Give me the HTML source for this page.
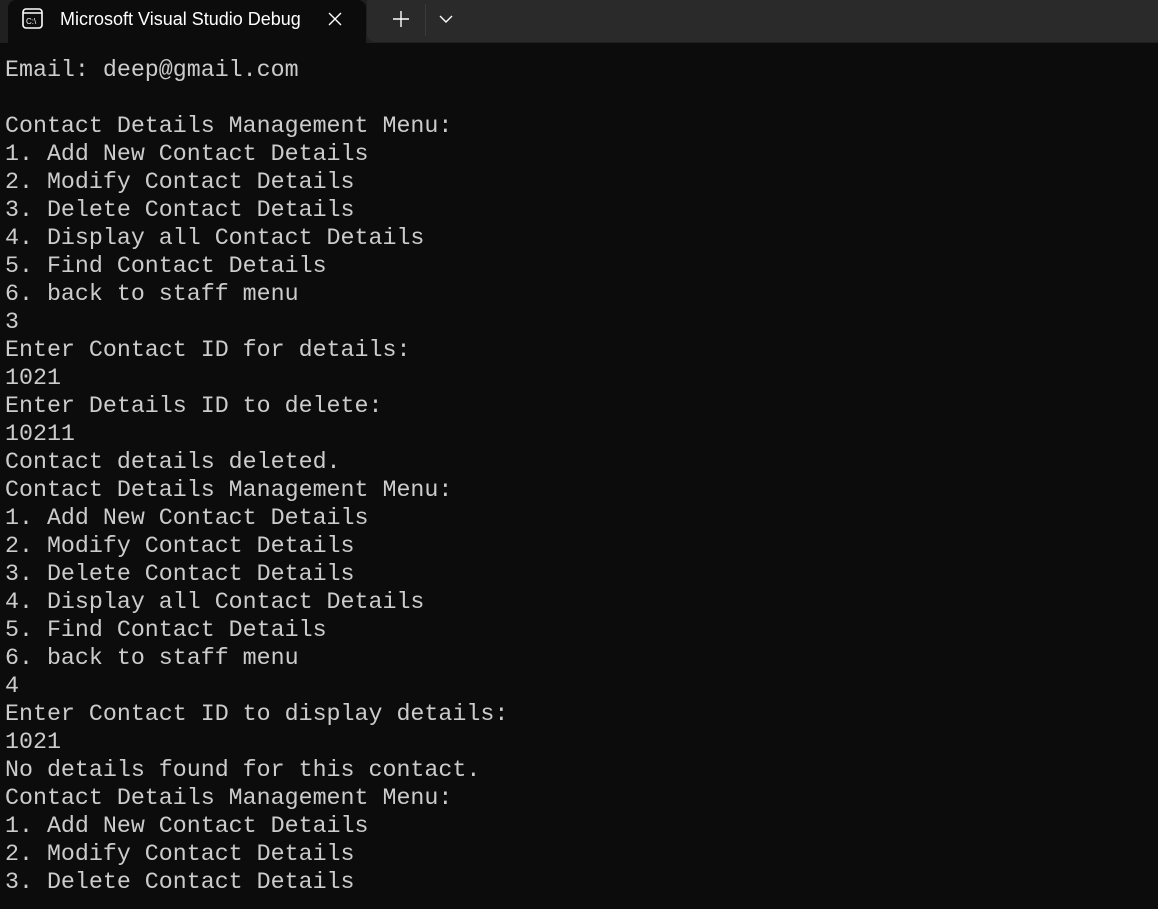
<!DOCTYPE html>
<html><head><style>
body{margin:0;width:1158px;height:909px;background:#0c0c0c;overflow:hidden;position:relative;font-family:"Liberation Mono",monospace}
.bar{position:absolute;left:0;top:0;width:1158px;height:43px;background:#202020}
.tab{position:absolute;left:8px;top:0;width:358px;height:43px;background:#0c0c0c;border-radius:8px 8px 0 0}
.title{position:absolute;left:60px;top:9px;font:18px "Liberation Sans",sans-serif;color:#fff;width:246px;overflow:hidden;white-space:nowrap}
.btns{position:absolute;left:367px;top:0;width:791px;height:42px;background:#2a2a2a;border-radius:0 0 0 8px}
pre{position:absolute;left:5px;top:56px;margin:0;font-size:23.3px;line-height:28px;color:#cccccc;font-family:"Liberation Mono",monospace}
</style></head><body>
<div class="bar"></div>
<div class="btns"></div>
<div class="tab"></div>
<svg style="position:absolute;left:22px;top:8px" width="22" height="22" viewBox="0 0 22 22"><rect x="1" y="1" width="19" height="19" rx="3" fill="none" stroke="#fff" stroke-width="1.6"/><line x1="1" y1="5" x2="20" y2="5" stroke="#fff" stroke-width="1.4"/><text x="4" y="16" font-size="8" fill="#fff" font-family="Liberation Sans">C:\</text></svg>
<div class="title">Microsoft Visual Studio Debug Console</div>
<svg style="position:absolute;left:327px;top:11px" width="16" height="16"><path d="M2 2L14 14M14 2L2 14" stroke="#fff" stroke-width="1.4"/></svg>
<svg style="position:absolute;left:392px;top:10px" width="18" height="18"><path d="M9 1V17M1 9H17" stroke="#fff" stroke-width="1.4"/></svg>
<div style="position:absolute;left:425px;top:4px;width:1px;height:32px;background:#3a3a3a"></div>
<svg style="position:absolute;left:439px;top:14px" width="14" height="10"><path d="M1 2L7 8L13 2" stroke="#fff" stroke-width="1.4" fill="none"/></svg>
<pre>Email: deep@gmail.com

Contact Details Management Menu:
1. Add New Contact Details
2. Modify Contact Details
3. Delete Contact Details
4. Display all Contact Details
5. Find Contact Details
6. back to staff menu
3
Enter Contact ID for details:
1021
Enter Details ID to delete:
10211
Contact details deleted.
Contact Details Management Menu:
1. Add New Contact Details
2. Modify Contact Details
3. Delete Contact Details
4. Display all Contact Details
5. Find Contact Details
6. back to staff menu
4
Enter Contact ID to display details:
1021
No details found for this contact.
Contact Details Management Menu:
1. Add New Contact Details
2. Modify Contact Details
3. Delete Contact Details</pre>
</body></html>
